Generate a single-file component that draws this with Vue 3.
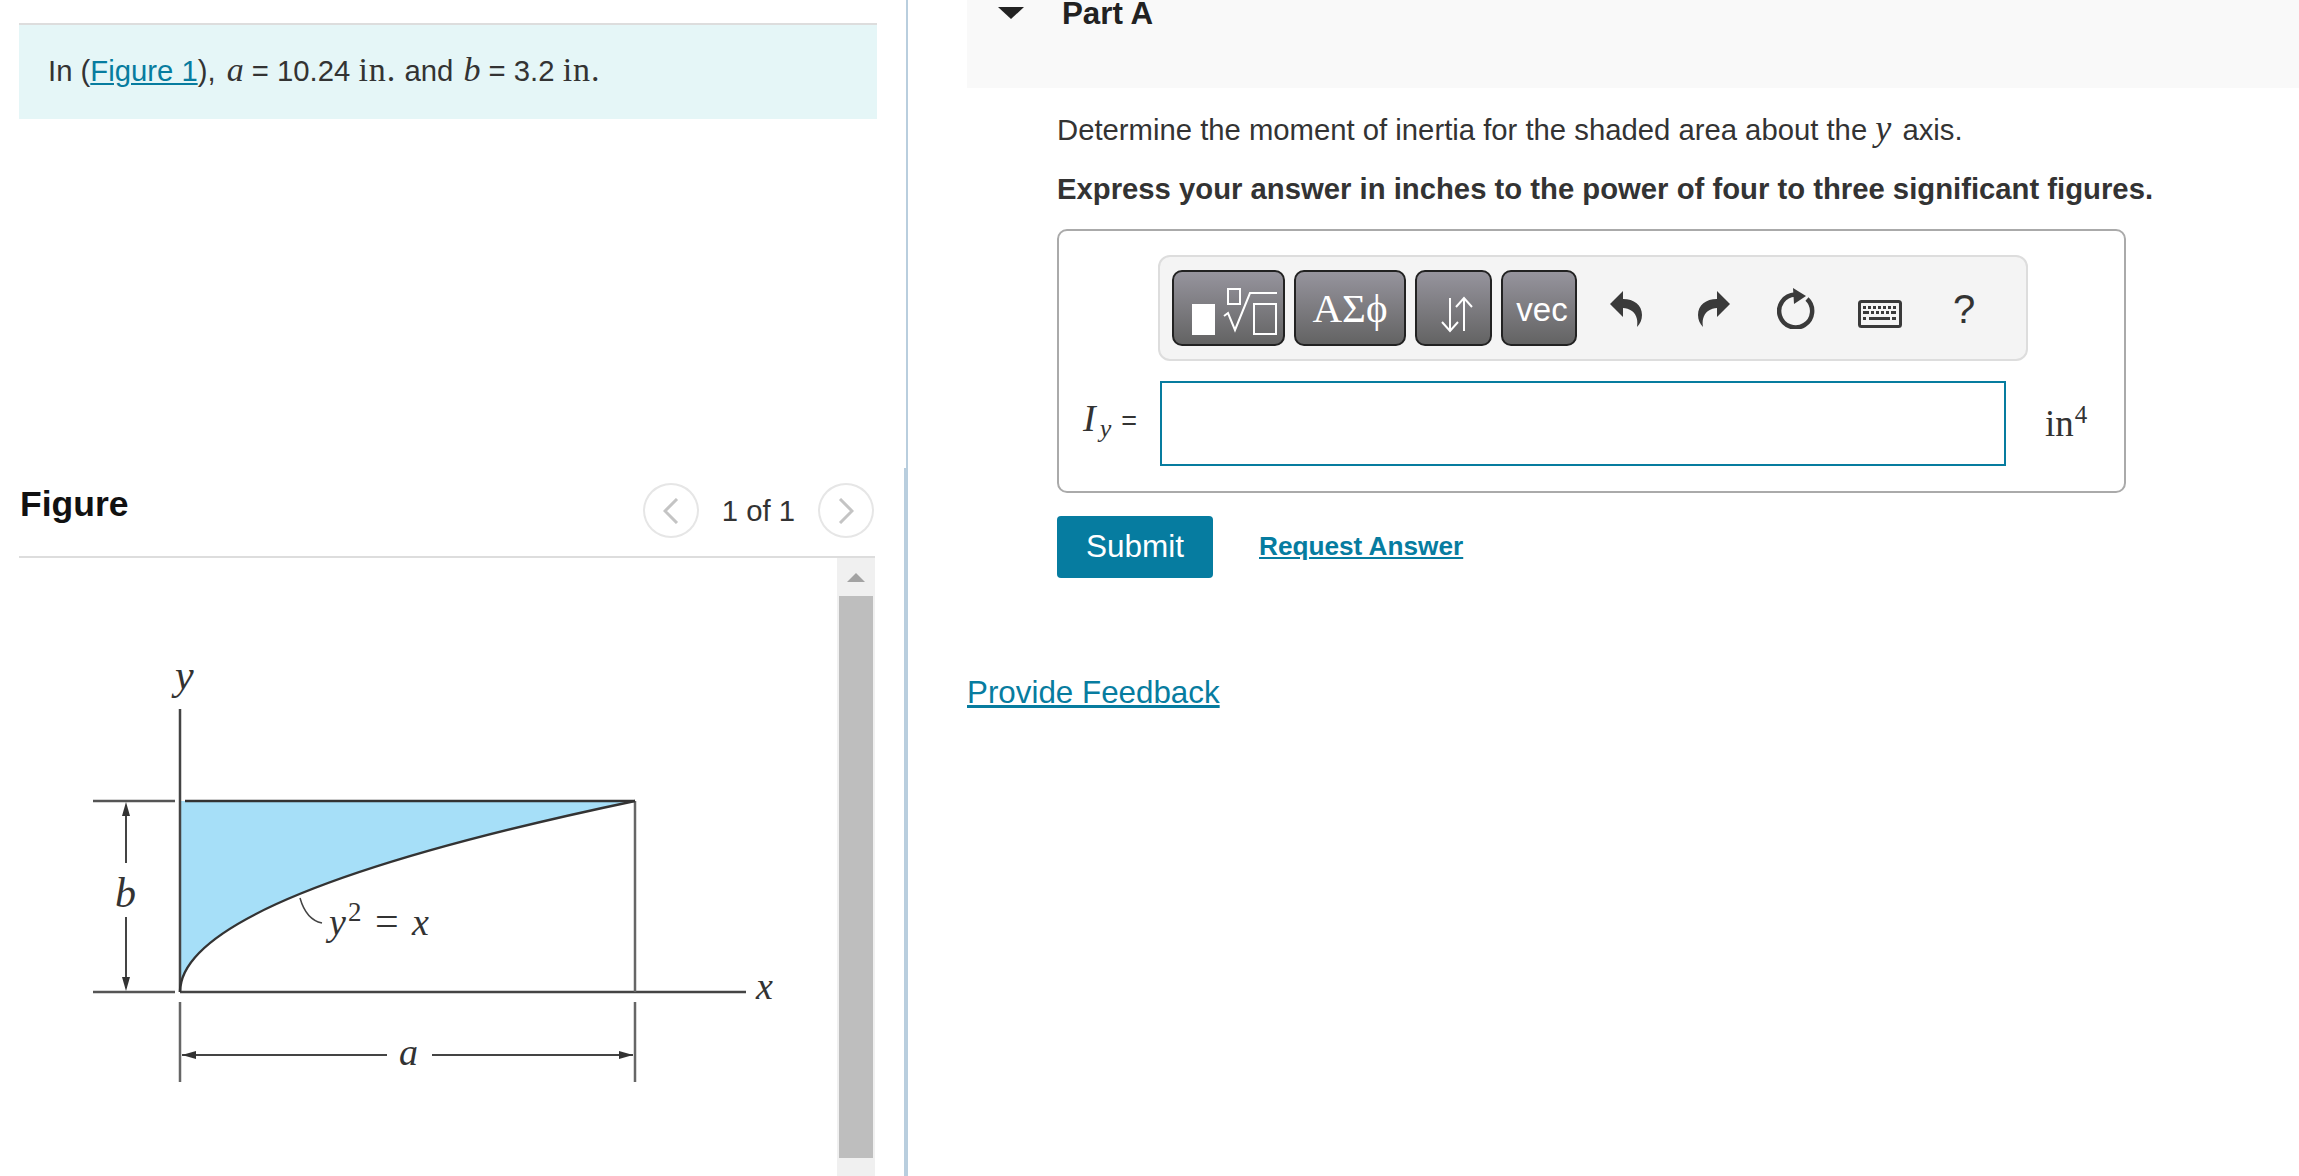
<script setup>
// keyboard icon keys, [x, y, w]
const keys = [
  [5, 6, 3], [10, 6, 3], [15, 6, 3], [20, 6, 3], [25, 6, 3], [30, 6, 3], [35, 6, 3],
  [5, 11, 6], [13, 11, 3], [18, 11, 3], [23, 11, 3], [28, 11, 3], [33, 11, 5],
  [5, 17, 3], [11, 17, 21], [34, 17, 4]
];
</script>

<template>
  <div class="page">
    <div class="left">
      <div class="intro">
        <span>In (<a href="#" class="link">Figure 1</a>), <i class="math var-a">a</i> = 10.24 <span class="math-up">in.</span> and <i class="math var-b">b</i> = 3.2 <span class="math-up">in.</span></span>
      </div>

      <div class="figure-head">
        <h2 class="figure-title">Figure</h2>
        <div class="pager">
          <button class="pager-btn">
            <svg width="16" height="26" viewBox="0 0 16 26"><path d="M14 1 L2 13 L14 25" /></svg>
          </button>
          <span class="pager-text">1 of 1</span>
          <button class="pager-btn">
            <svg width="16" height="26" viewBox="0 0 16 26"><path d="M2 1 L14 13 L2 25" /></svg>
          </button>
        </div>
      </div>

      <div class="figure-body">
        <svg class="diagram" width="818" height="618" viewBox="19 558 818 618">
          <path d="M180 992 Q180 896.5 635 801 L180 801 Z" fill="#a6dff8" />
          <g fill="none" stroke="#444" stroke-width="2.5">
            <path d="M180 709 V992" />
            <path d="M93 801 H175" stroke="#555" />
            <path d="M185 801 H635" stroke="#333" />
            <path d="M93 992 H175" stroke="#555" />
            <path d="M180 992 H746" />
            <path d="M635 801 V992" stroke="#666" />
            <path d="M180 992 Q180 896.5 635 801" stroke="#333" />
            <path d="M180 1002 V1082 M635 1002 V1082" stroke="#666" />
            <path d="M126 806 V863 M126 917 V988" stroke-width="2" />
            <path d="M182 1055 H387 M432 1055 H633" stroke-width="2" />
            <path d="M300 898 C304 912 312 921 322 923" stroke-width="1.5" />
          </g>
          <g fill="#333">
            <path d="M126 802 L122 816 H130 Z" />
            <path d="M126 991 L122 977 H130 Z" />
            <path d="M182 1055 L196 1051 V1059 Z" />
            <path d="M633 1055 L619 1051 V1059 Z" />
          </g>
          <g class="fig-label">
            <text x="175" y="689" class="fig-tall">y</text>
            <text x="115" y="907" class="fig-tall">b</text>
            <text x="399" y="1065">a</text>
            <text x="756" y="999">x</text>
            <text x="329" y="935">y</text>
            <text x="348" y="921" class="fig-sup">2</text>
            <text x="375" y="935" class="fig-eq">=</text>
            <text x="412" y="935">x</text>
          </g>
        </svg>
        <div class="scrollbar">
          <div class="scroll-arrow"></div>
          <div class="scroll-thumb"></div>
        </div>
      </div>
    </div>

    <div class="divider">
      <div class="divider-top"></div>
      <div class="divider-bottom"></div>
    </div>

    <div class="right">
      <div class="part-head">
        <span class="caret"></span>
        <span class="part-title">Part A</span>
      </div>

      <div class="part-body">
        <p class="statement">Determine the moment of inertia for the shaded area about the <i class="math var-y">y</i> axis.</p>
        <p class="statement strong">Express your answer in inches to the power of four to three significant figures.</p>

        <div class="answer-box">
          <div class="toolbar">
            <button class="tool tool-tmpl">
              <svg width="109" height="72" viewBox="0 0 109 72">
                <rect x="18" y="32" width="23" height="31" fill="#fff" />
                <g fill="none" stroke="#fff" stroke-width="2">
                  <rect x="54" y="17" width="12" height="15" />
                  <path d="M50 44 L54 41 L61 58 L76 21 H103" />
                  <rect x="80" y="32" width="22" height="30" />
                </g>
              </svg>
            </button>
            <button class="tool tool-greek">ΑΣϕ</button>
            <button class="tool tool-arrows">
              <svg width="73" height="72" viewBox="0 0 73 72">
                <g fill="none" stroke="#fff" stroke-width="2">
                  <path d="M33 26 V59 M25 50 L33 59 L41 50" />
                  <path d="M47 59 V26 M39 35 L47 26 L55 35" />
                </g>
              </svg>
            </button>
            <button class="tool tool-vec"><span>vec</span></button>

            <svg class="icon icon-undo" width="32" height="36" viewBox="0 0 32 36">
              <path d="M0 13 L13 0 V8 C24 8 32 14 32 24 C32 29 30 33 27 36 C28 30 27 24 22 20 C19 18 16 17 13 17 V26 Z" />
            </svg>
            <svg class="icon icon-redo" width="32" height="36" viewBox="0 0 32 36">
              <path d="M32 13 L19 0 V8 C8 8 0 14 0 24 C0 29 2 33 5 36 C4 30 5 24 10 20 C13 18 16 17 19 17 V26 Z" />
            </svg>
            <svg class="icon icon-reset" width="38" height="41" viewBox="0 0 38 41">
              <path d="M18 6.5 A16.5 16.5 0 1 0 30 11" fill="none" stroke="#3a3a3a" stroke-width="4.5" />
              <path d="M16 0 L29 8 L17 16 Z" />
            </svg>
            <svg class="icon icon-keys" width="44" height="28" viewBox="0 0 44 28">
              <rect x="1.5" y="1.5" width="41" height="25" rx="2" fill="none" stroke="#3a3a3a" stroke-width="3" />
              <rect v-for="(k, i) in keys" :key="i" :x="k[0]" :y="k[1]" :width="k[2]" height="3" />
            </svg>
            <span class="help">?</span>
          </div>

          <div class="answer-row">
            <span class="answer-label"><i class="math big">I</i><i class="math sub">y</i><span class="equals">=</span></span>
            <input class="answer-input" type="text" />
            <span class="answer-unit">in<sup>4</sup></span>
          </div>
        </div>

        <div class="actions">
          <button class="submit"><span>Submit</span></button>
          <a href="#" class="request">Request Answer</a>
        </div>
      </div>

      <a href="#" class="link feedback">Provide Feedback</a>
    </div>
  </div>
</template>

<style>
html, body {
  margin: 0;
  overflow: hidden;
  background: #fff;
}
</style>

<style scoped>
.page {
  display: flex;
  height: 1176px;
  overflow: hidden;
  font-family: "Liberation Sans", Arial, sans-serif;
  font-size: 29.28px;
  color: #333;
}

.left {
  width: 904px;
  flex: none;
  box-sizing: border-box;
  padding: 23px 0 0 19px;
}

.intro {
  width: 858px;
  height: 96px;
  box-sizing: border-box;
  border-top: 2px solid #ddd;
  background: #e5f6f7;
  padding-left: 29px;
  display: flex;
  align-items: center;
}

.intro > span {
  line-height: 40px;
  margin-top: -2px;
}

.link {
  color: #077c9f;
}

.math {
  font-family: "Liberation Serif", "Times New Roman", serif;
  font-style: italic;
}

.var-a {
  font-size: 34px;
  line-height: 0;
  margin-left: 3px;
}

.var-b {
  font-size: 34px;
  line-height: 0;
  margin-left: 2px;
}

.var-y {
  font-size: 36px;
  line-height: 0;
  padding-right: 3px;
}

.math-up {
  font-family: "Liberation Serif", "Times New Roman", serif;
  font-size: 34px;
  line-height: 0;
  letter-spacing: 1px;
}

.figure-head {
  width: 856px;
  margin-top: 364px;
  padding-bottom: 18px;
  border-bottom: 2px solid #ddd;
  display: flex;
  justify-content: space-between;
  align-items: center;
}

.figure-title {
  margin: 0 0 12px 1px;
  font-size: 35.5px;
  font-weight: bold;
  color: #111;
}

.pager {
  display: flex;
  align-items: center;
  gap: 23px;
  margin-right: 1px;
}

.pager-btn {
  width: 56px;
  height: 55px;
  padding: 0;
  border: 2px solid #e6e6e6;
  border-radius: 50%;
  background: #fff;
  display: flex;
  align-items: center;
  justify-content: center;
}

.pager-btn path {
  fill: none;
  stroke: #c4c4c4;
  stroke-width: 3;
}

.figure-body {
  display: flex;
  width: 856px;
  height: 618px;
}

.diagram {
  flex: none;
  display: block;
}

.fig-label text {
  font-family: "Liberation Serif", "Times New Roman", serif;
  font-style: italic;
  font-size: 38px;
  fill: #333;
}

.fig-label .fig-tall {
  font-size: 42px;
}

.fig-label .fig-sup {
  font-size: 27px;
  font-style: normal;
}

.fig-label .fig-eq {
  font-size: 42px;
  font-style: normal;
}

.scrollbar {
  width: 38px;
  flex: none;
  background: #f0f0f0;
  display: flex;
  flex-direction: column;
  align-items: center;
}

.scroll-arrow {
  margin-top: 15px;
  margin-bottom: 14px;
  width: 0;
  height: 0;
  border-left: 9px solid transparent;
  border-right: 9px solid transparent;
  border-bottom: 9px solid #a3a3a3;
}

.scroll-thumb {
  width: 34px;
  height: 562px;
  background: #bebebe;
}

.divider {
  width: 4px;
  flex: none;
  display: flex;
  flex-direction: column;
}

.divider-top {
  height: 468px;
  width: 2px;
  margin-left: 2px;
  background: #b9cede;
}

.divider-bottom {
  flex: 1;
  background: #b9cede;
}

.right {
  flex: 1;
  min-width: 0;
  padding-left: 59px;
}

.part-head {
  height: 88px;
  background: #f9f9f9;
  display: flex;
  align-items: flex-start;
  padding-left: 31px;
}

.caret {
  margin-top: 7px;
  width: 0;
  height: 0;
  border-left: 13px solid transparent;
  border-right: 13px solid transparent;
  border-top: 12px solid #222;
}

.part-title {
  margin-left: 38px;
  margin-top: 1px;
  font-size: 31.3px;
  line-height: 26px;
  font-weight: bold;
  color: #222;
}

.part-body {
  padding-left: 90px;
}

.statement {
  margin: 21px 0 0;
  line-height: 42px;
  height: 42px;
}

.statement.strong {
  margin-top: 17px;
  font-weight: bold;
}

.answer-box {
  width: 1069px;
  height: 264px;
  box-sizing: border-box;
  margin-top: 19px;
  border: 2px solid #aaa;
  border-radius: 10px;
  padding: 24px 0 0 99px;
}

.toolbar {
  width: 870px;
  height: 106px;
  box-sizing: border-box;
  border: 2px solid #ddd;
  border-radius: 12px;
  background: #f4f4f4;
  display: flex;
  align-items: center;
  padding-left: 12px;
}

.tool {
  height: 76px;
  box-sizing: border-box;
  padding: 0;
  border: 2px solid #222;
  border-radius: 10px;
  background: linear-gradient(#96949d, #636363);
  color: #fff;
  margin-right: 9px;
  display: flex;
  align-items: center;
  justify-content: center;
}

.tool-tmpl {
  width: 113px;
}

.tool-greek {
  width: 112px;
  font-family: "Liberation Serif", "Times New Roman", serif;
  font-size: 41px;
}

.tool-arrows {
  width: 77px;
}

.tool-vec {
  width: 76px;
  margin-right: 0;
  font-family: "Liberation Sans", Arial, sans-serif;
  font-size: 33px;
}

.tool-vec span {
  position: relative;
  top: 2px;
  left: 3px;
}

.icon {
  flex: none;
  fill: #3a3a3a;
}

.icon-undo {
  margin-left: 33px;
  margin-top: 2px;
}

.icon-redo {
  margin-left: 56px;
  margin-top: 2px;
}

.icon-reset {
  margin-left: 47px;
}

.icon-keys {
  margin-left: 43px;
  margin-top: 11px;
}

.help {
  margin-left: 51px;
  font-size: 40px;
  line-height: 40px;
  color: #333;
  margin-top: 1px;
}

.answer-row {
  display: flex;
  align-items: center;
  margin-top: 20px;
  margin-left: -99px;
}

.answer-label {
  width: 101px;
  box-sizing: border-box;
  padding-left: 24px;
  white-space: nowrap;
  margin-top: -12px;
}

.math.big {
  font-size: 38px;
}

.math.sub {
  font-size: 26px;
  position: relative;
  top: 6px;
  margin-left: 4px;
}

.equals {
  margin-left: 10px;
  font-size: 27px;
  position: relative;
  top: -1px;
}

.answer-input {
  width: 846px;
  height: 85px;
  box-sizing: border-box;
  padding: 0;
  border: 2px solid #077c9f;
  background: #fff;
  outline: none;
}

.answer-unit {
  margin-left: 39px;
  font-family: "Liberation Serif", "Times New Roman", serif;
  font-size: 37px;
}

.answer-unit sup {
  font-size: 25px;
  line-height: 0;
  vertical-align: 13px;
  margin-left: 1px;
}

.actions {
  display: flex;
  align-items: center;
  margin-top: 23px;
}

.submit {
  width: 156px;
  height: 62px;
  padding: 0;
  border: none;
  border-radius: 4px;
  background: #067ca0;
  color: #fff;
  font-family: "Liberation Sans", Arial, sans-serif;
  font-size: 31.5px;
}

.submit span {
  position: relative;
  top: -1px;
}

.request {
  margin-left: 46px;
  margin-top: -2px;
  font-size: 26.2px;
  font-weight: bold;
  color: #067ca0;
}

.feedback {
  display: inline-block;
  margin-top: 94px;
  font-size: 31.35px;
  line-height: 42px;
}
</style>
